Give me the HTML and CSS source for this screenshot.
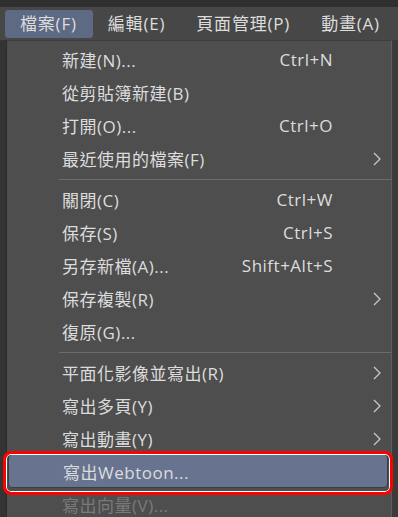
FILE: index.html
```html
<!DOCTYPE html>
<html lang="zh-Hant">
    <head>
        <meta charset="utf-8"/>
        <title>檔案選單</title>
        <link rel="stylesheet" href="styles.css">
    </head>
    <body>
        <div class="topstrip"></div>
        <!-- menu bar -->
        <div class="menubar">
            <div class="mitem active">檔案(F)</div>
            <div class="mitem">編輯(E)</div>
            <div class="mitem">頁面管理(P)</div>
            <div class="mitem">動畫(A)</div>
        </div>
        <div class="main">
            <div class="leftstrip"></div>
            <!-- file dropdown -->
            <div class="panel">
                <div class="row"><span class="label">新建(N)...</span><span class="key">Ctrl+N</span><span class="sub"></span></div>
                <div class="row"><span class="label">從剪貼簿新建(B)</span><span class="key"></span><span class="sub"></span></div>
                <div class="row"><span class="label">打開(O)...</span><span class="key">Ctrl+O</span><span class="sub"></span></div>
                <div class="row"><span class="label">最近使用的檔案(F)</span><span class="key"></span><span class="sub"><svg width="8" height="14" viewBox="0 0 8 14"><path d="M1 1 L7 7 L1 13" /></svg></span></div>
                <div class="sep"></div>
                <div class="row"><span class="label">關閉(C)</span><span class="key">Ctrl+W</span><span class="sub"></span></div>
                <div class="row"><span class="label">保存(S)</span><span class="key">Ctrl+S</span><span class="sub"></span></div>
                <div class="row"><span class="label">另存新檔(A)...</span><span class="key">Shift+Alt+S</span><span class="sub"></span></div>
                <div class="row"><span class="label">保存複製(R)</span><span class="key"></span><span class="sub"><svg width="8" height="14" viewBox="0 0 8 14"><path d="M1 1 L7 7 L1 13" /></svg></span></div>
                <div class="row"><span class="label">復原(G)...</span><span class="key"></span><span class="sub"></span></div>
                <div class="sep"></div>
                <div class="row"><span class="label">平面化影像並寫出(R)</span><span class="key"></span><span class="sub"><svg width="8" height="14" viewBox="0 0 8 14"><path d="M1 1 L7 7 L1 13" /></svg></span></div>
                <div class="row"><span class="label">寫出多頁(Y)</span><span class="key"></span><span class="sub"><svg width="8" height="14" viewBox="0 0 8 14"><path d="M1 1 L7 7 L1 13" /></svg></span></div>
                <div class="row"><span class="label">寫出動畫(Y)</span><span class="key"></span><span class="sub"><svg width="8" height="14" viewBox="0 0 8 14"><path d="M1 1 L7 7 L1 13" /></svg></span></div>
                <div class="row hover"><span class="label">寫出Webtoon...</span><span class="key"></span><span class="sub"></span></div>
                <div class="row disabled"><span class="label">寫出向量(V)...</span><span class="key"></span><span class="sub"></span></div>
            </div>
            <div class="rightside"></div>
        </div>
        <!-- annotation -->
        <div class="mark"></div>
    </body>
</html>
```

FILE: styles.css
```css
html, body {
    margin: 0;
    padding: 0;
}
body {
    width: 398px;
    height: 517px;
    overflow: hidden;
    background: #3b3b3b;
    color: #dcdcdc;
    font-family: "Open Sans", "Noto Sans CJK TC", sans-serif;
    font-size: 17px;
    letter-spacing: 0.5px;
    position: relative;
}

.topstrip {
    height: 7px;
    background: #2f2f2f;
}

.menubar {
    height: 33px;
    background: #474747;
    display: flex;
    padding-left: 5px;
    box-sizing: border-box;
    overflow: hidden;
}
.mitem {
    flex-shrink: 0;
    white-space: nowrap;
    padding: 0 16px 0 15px;
    margin-top: 3px;
    height: 28px;
    line-height: 28px;
    border-radius: 3px;
    letter-spacing: 0.8px;
}
.mitem.active {
    background: #5e6984;
}

.main {
    display: flex;
    height: 477px;
}
.leftstrip {
    width: 7px;
    background: #343434;
    border-right: 1px solid #2c2c2c;
    box-sizing: border-box;
}
.panel {
    width: 385px;
    background: #4e4e4e;
    border-top: 1px solid #3e3e3e;
    border-right: 1px solid #5e5e5e;
    box-sizing: border-box;
    padding-top: 2px;
}
.rightside {
    flex: 1;
    background: #3b3b3b;
}

.row {
    display: flex;
    align-items: center;
    height: 33px;
    padding-left: 55px;
    box-sizing: border-box;
}
.label {
    flex: 1;
    white-space: nowrap;
}
.key {
    white-space: nowrap;
}
.sub {
    width: 58px;
    display: flex;
    justify-content: flex-end;
    padding-right: 10px;
    box-sizing: border-box;
}
.sub svg path {
    fill: none;
    stroke: #c8c8c8;
    stroke-width: 1.3;
}

.sep {
    height: 8px;
    margin-left: 52px;
    display: flex;
    align-items: center;
}
.sep:before {
    content: "";
    flex: 1;
    height: 1px;
    background: #6c6c6c;
}

.row.hover {
    margin: -1px 3px 0 1px;
    padding-left: 54px;
    background: #68748f;
    border: 1px solid #3a3d45;
    border-radius: 4px;
    height: 34px;
}
.row.disabled {
    color: #7a7a7a;
}

.mark {
    position: absolute;
    left: 3px;
    top: 451px;
    width: 390px;
    height: 44px;
    box-sizing: border-box;
    border: 3px solid #ff0000;
    border-radius: 8px;
    box-shadow: inset 0 0 0 1px #ffffff;
}
```
